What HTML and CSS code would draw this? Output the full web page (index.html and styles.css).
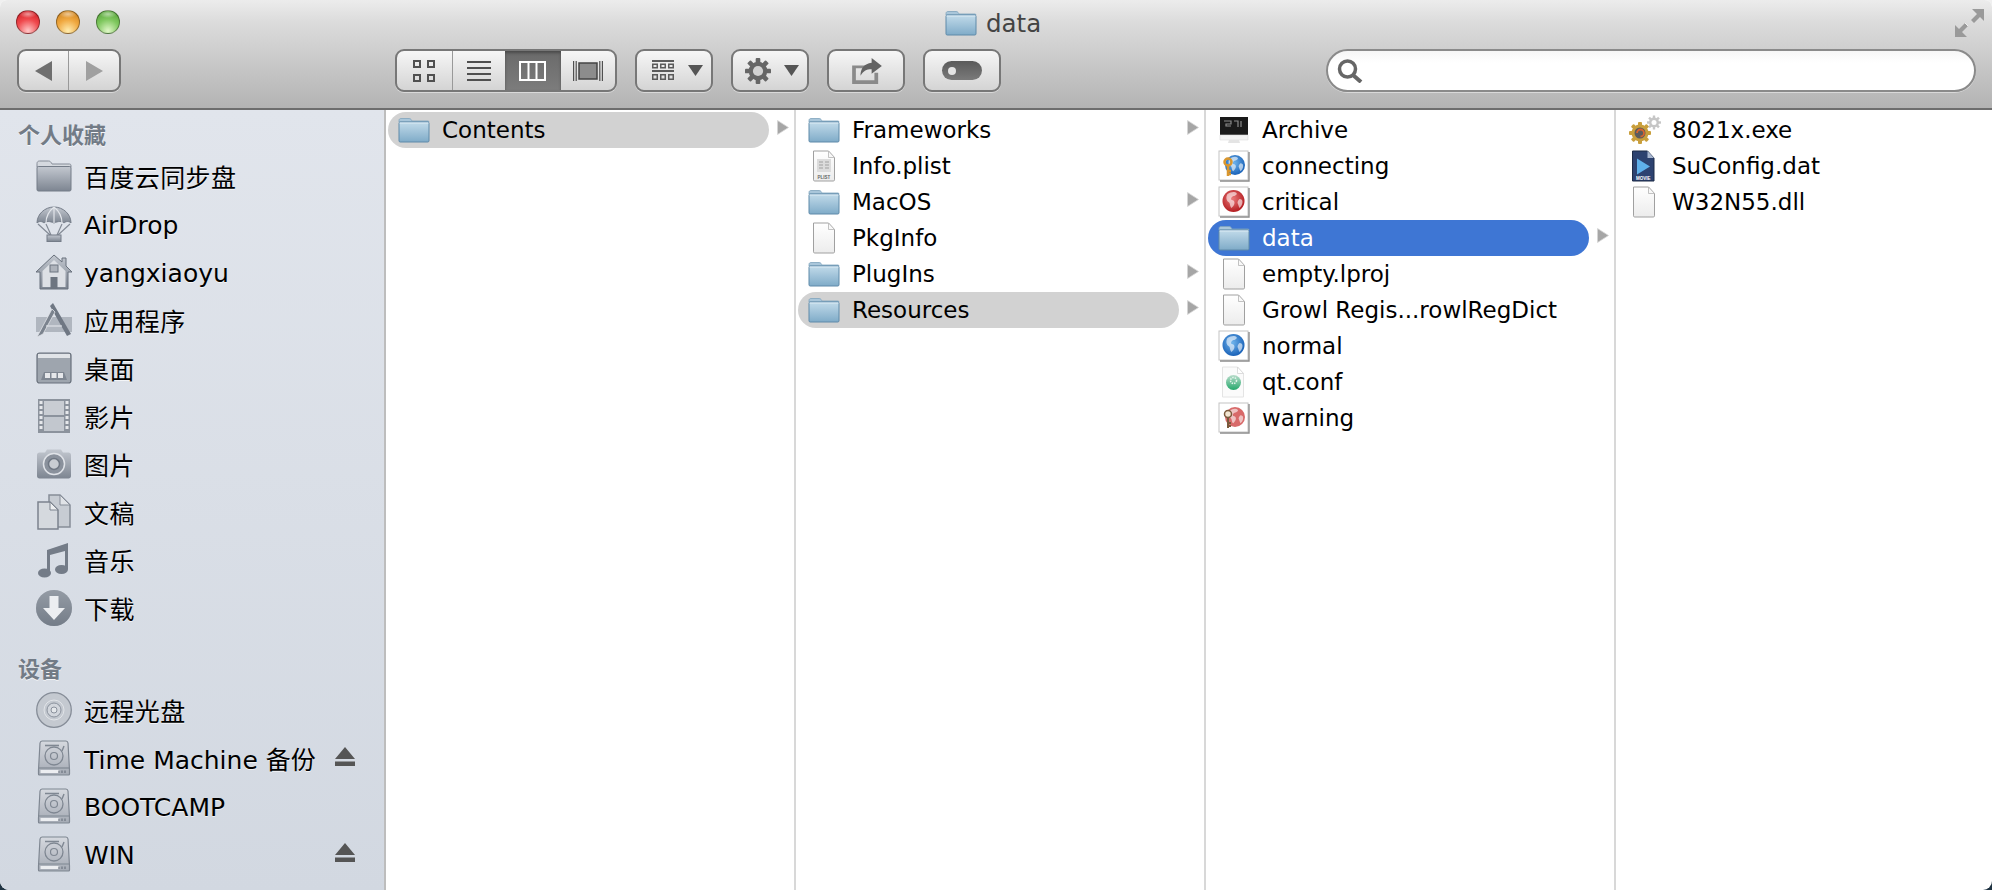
FILE: index.html
```html
<!DOCTYPE html>
<html lang="zh-CN">
<head>
    <meta charset="UTF-8">
    <title>data</title>
    <link rel="stylesheet" href="styles.css">
</head>
<body>

    <svg class="sprites" width="0" height="0">
        <defs>
            <linearGradient id="blueFolder" x1="0" y1="0" x2="0" y2="1">
                <stop offset="0" stop-color="#c2dbea"/>
                <stop offset="1" stop-color="#7fabc8"/>
            </linearGradient>
            <linearGradient id="greyIcon" x1="0" y1="0" x2="0" y2="1">
                <stop offset="0" stop-color="#c3c8d0"/>
                <stop offset="1" stop-color="#7d8591"/>
            </linearGradient>
            <linearGradient id="driveBody" x1="0" y1="0" x2="0" y2="1">
                <stop offset="0" stop-color="#d6d9df"/>
                <stop offset="1" stop-color="#a4aab4"/>
            </linearGradient>
            <linearGradient id="paper" x1="0" y1="0" x2="0" y2="1">
                <stop offset="0" stop-color="#ffffff"/>
                <stop offset="1" stop-color="#ececec"/>
            </linearGradient>
            <linearGradient id="qtGreen" x1="0" y1="0" x2="0" y2="1">
                <stop offset="0" stop-color="#b9dccb"/>
                <stop offset="1" stop-color="#25a96c"/>
            </linearGradient>
            <radialGradient id="globeBlue" cx="0.45" cy="0.4" r="0.6">
                <stop offset="0" stop-color="#6fb4ec"/>
                <stop offset="1" stop-color="#1a62b8"/>
            </radialGradient>
            <radialGradient id="globeRed" cx="0.45" cy="0.4" r="0.6">
                <stop offset="0" stop-color="#ea7a7a"/>
                <stop offset="1" stop-color="#b41e22"/>
            </radialGradient>

            <symbol id="folder" viewBox="0 0 32 26">
                <path d="M1 5V3.5C1 2 2 1.5 3 1.5h8c1.2 0 2 .6 2.6 1.8L14.2 4H30c.7 0 1 .4 1 1z" fill="#a9c6da" stroke="#7fa3bd" stroke-width=".8"/>
                <rect x="1" y="5" width="30" height="20" rx="1.2" fill="url(#blueFolder)" stroke="#5f8aa9" stroke-width="1"/>
                <path d="M1.6 6h28.8" stroke="#dcebf4" stroke-width="1"/>
            </symbol>

            <symbol id="page" viewBox="0 0 24 32">
                <path d="M1.5 1h15l6 6.5v22.3c0 .7-.4 1.2-1.2 1.2H2.7c-.8 0-1.2-.5-1.2-1.2z" fill="url(#paper)" stroke="#a0a0a0" stroke-width="1"/>
                <path d="M16.5 1v6.5h6z" fill="#f8f8f8" stroke="#b4b4b4" stroke-width=".8"/>
            </symbol>

            <symbol id="side-folder" viewBox="0 0 36 32">
                <path d="M1 7V3.5C1 2 2 1 3.5 1h9c1.4 0 2.2.7 3 2.2L16 4h17.500C34.500 4 35 4.600 35 6v1z" fill="#d5d9df" stroke="#868d98" stroke-width="1"/>
                <rect x="1" y="6.5" width="34" height="24.5" rx="1.4" fill="url(#greyIcon)" stroke="#747c88" stroke-width="1"/>
            </symbol>

            <symbol id="side-drive" viewBox="0 0 32 36">
                <path d="M4 1h24c1 0 1.8.8 2 2l1.5 27v4c0 .6-.5 1-1 1H1.5c-.5 0-1-.4-1-1v-4L2 3c.2-1.2 1-2 2-2z" fill="url(#driveBody)" stroke="#7f8792" stroke-width="1.2"/>
                <path d="M1 28h30" stroke="#7f8792" stroke-width="1.2"/>
                <path d="M2.5 30h19v3h-19z" fill="#eceef1"/>
                <path d="M21 30.500v2.500M24 30.500v2.500M27 30.500v2.500" stroke="#6d7580" stroke-width="1.2"/>
                <path d="M7 5.500h14" stroke="#7f8792" stroke-width="1.6"/>
                <circle cx="16" cy="16" r="9" fill="none" stroke="#7f8792" stroke-width="1.3"/>
                <circle cx="16" cy="16" r="3.5" fill="none" stroke="#7f8792" stroke-width="1.2"/>
                <path d="M24 11l2-5" stroke="#7f8792" stroke-width="1.4"/>
            </symbol>

            <symbol id="eject" viewBox="0 0 20 19">
                <path d="M10 0l10 12H0z M0 14.500h20V19H0z" fill="#555"/>
            </symbol>

            <symbol id="arrow" viewBox="0 0 12 15">
                <path d="M.5 .5L11.5 7.500 .5 14.500z" fill="#a6a6a6" stroke="#d6d6d6" stroke-width=".8"/>
            </symbol>

            <symbol id="monitor-doc" viewBox="0 0 30 32">
                <path d="M1 3h28v18H1z" fill="#1a1a1a"/>
                <path d="M1 21h28v5H1z" fill="#f3f3f3" stroke="#dcdcdc" stroke-width=".6"/>
                <path d="M10 26h10l1 3H9z" fill="#e4e4e4"/>
                <path d="M5 7h7v3H7v2h5M15 7h4v6M22 7v6" fill="none" stroke="#8c8c8c" stroke-width="1.2"/>
            </symbol>

            <symbol id="frame" viewBox="0 0 32 32">
                <rect x="1" y="1" width="29" height="29" fill="#fff" stroke="#c4c4c4"/>
                <path d="M31 2v29H2" fill="none" stroke="#8d8d8d" stroke-width="1.4"/>
            </symbol>

            <symbol id="continents" viewBox="0 0 22 22">
                <path d="M5 4c3-2 7-3 9-1 1 1-1 3-3 3-2 1-3 2-2 4 2 0 3 1 3 3s-2 4-3 5c-2-2-1-5-3-6C4 11 3 7 5 4z M17 9c2 0 3 1 3 3 0 3-2 5-3 6-1-2-1-3-2-5 0-2 1-3 2-4z" fill="#fff" opacity=".6"/>
            </symbol>
        </defs>
    </svg>

    <div class="window">

        <header class="toolbar">
            <div class="titlebar">
                <div class="lights">
                    <span class="light red"></span>
                    <span class="light amber"></span>
                    <span class="light green"></span>
                </div>
                <div class="title">
                    <svg class="title-icon"><use href="#folder"/></svg>
                    <span>data</span>
                </div>
                <svg class="fullscreen" viewBox="0 0 29 28">
                    <path d="M17 0h12v12l-4-4-6 6-3-3 6-6z M12 28H0V16l4 4 6-6 3 3-6 6z" fill="#9a9a9a"/>
                    <path d="M10 14l3 3" stroke="#eee" stroke-width="1"/>
                </svg>
            </div>

            <div class="controls">
                <div class="btn nav">
                    <span class="cell nav-cell">
                        <svg width="18" height="20" viewBox="0 0 18 20"><path d="M17 0v20L0 10z" fill="#6f6f6f"/></svg>
                    </span>
                    <span class="cell nav-cell">
                        <svg width="18" height="20" viewBox="0 0 18 20"><path d="M1 0v20l17-10z" fill="#a0a0a0"/></svg>
                    </span>
                </div>

                <div class="btn views">
                    <span class="cell view-cell first">
                        <svg width="22" height="24" viewBox="0 0 22 24" fill="none" stroke="#505050" stroke-width="2"><rect x="1" y="2" width="6" height="6"/><rect x="15" y="2" width="6" height="6"/><rect x="1" y="16" width="6" height="6"/><rect x="15" y="16" width="6" height="6"/></svg>
                    </span>
                    <span class="cell view-cell list">
                        <svg width="24" height="20" viewBox="0 0 24 20" fill="#505050"><rect y="0" width="24" height="2"/><rect y="6" width="24" height="2"/><rect y="12" width="24" height="2"/><rect y="18" width="24" height="2"/></svg>
                    </span>
                    <span class="cell view-cell on">
                        <svg width="27" height="20" viewBox="0 0 27 20" fill="none" stroke="#fff" stroke-width="2"><rect x="1" y="1" width="25" height="18"/><path d="M9.5 1v18M17.5 1v18"/></svg>
                    </span>
                    <span class="cell view-cell flow">
                        <svg width="30" height="20" viewBox="0 0 30 20" fill="#505050"><rect x="0" width="1.2" height="20"/><rect x="2.6" width="1.2" height="20"/><rect x="26.2" width="1.2" height="20"/><rect x="28.800" width="1.2" height="20"/><path d="M6 2h18v16H6z" fill="#8c8c8c" stroke="#444" stroke-width="1.5"/></svg>
                    </span>
                </div>

                <div class="btn arrange">
                    <svg width="22" height="22" viewBox="0 0 22 22" fill="#5a5a5a"><rect y="0" width="22" height="2"/><rect y="10" width="22" height="2"/><path fill-rule="evenodd" d="M0 3.500h6v5H0zM1.500 5v2h3V5zM8 3.500h6v5H8zM9.500 5v2h3V5zM16 3.500h6v5h-6zM17.500 5v2h3V5zM0 14h6v6H0zM1.500 15.500v3h3v-3zM8 14h6v6H8zM9.500 15.500v3h3v-3zM16 14h6v6h-6zM17.500 15.500v3h3v-3z"/></svg>
                    <svg class="drop" width="15" height="11" viewBox="0 0 15 11"><path d="M0 0h15L7.500 11z" fill="#555"/></svg>
                </div>

                <div class="btn action">
                    <svg width="28" height="26" viewBox="0 0 28 28">
                        <g fill="#666">
                            <rect x="11.500" y="0" width="5" height="28" rx="1"/>
                            <rect x="11.500" y="0" width="5" height="28" rx="1" transform="rotate(45 14 14)"/>
                            <rect x="11.500" y="0" width="5" height="28" rx="1" transform="rotate(90 14 14)"/>
                            <rect x="11.500" y="0" width="5" height="28" rx="1" transform="rotate(135 14 14)"/>
                            <circle cx="14" cy="14" r="10"/>
                        </g>
                        <circle cx="14" cy="14" r="5.500" fill="#d2d2d2"/>
                    </svg>
                    <svg class="drop" width="15" height="11" viewBox="0 0 15 11"><path d="M0 0h15L7.500 11z" fill="#555"/></svg>
                </div>

                <div class="btn share">
                    <svg width="32" height="26" viewBox="0 0 32 28">
                        <path d="M0 8h16v3H4v13h20v-8h4v12H0z" fill="#8a8a8a"/>
                        <path d="M21 0l11 8.500-11 8.500v-5c-6 0-9 2-12 7 0-8 4-13 12-14z" fill="#636363"/>
                    </svg>
                </div>

                <div class="btn tags">
                    <span class="tag-pill"><span class="tag-hole"></span></span>
                </div>

                <div class="search">
                    <svg width="28" height="24" viewBox="0 0 28 24" fill="none" stroke="#666">
                        <circle cx="10.5" cy="10" r="8" stroke-width="3.500"/>
                        <path d="M16 16l8 7" stroke-width="4"/>
                    </svg>
                </div>
            </div>
        </header>

        <main class="body">

            <nav class="sidebar">
                <div class="side-head">个人收藏</div>
                <div class="side-row">
                    <svg class="side-icon"><use href="#side-folder"/></svg>
                    <span class="cn">百度云同步盘</span>
                </div>
                <div class="side-row">
                    <svg class="side-icon" viewBox="0 0 36 36">
                        <path d="M1 17C1 8 9 1 18 1s17 7 17 16c-2-2-5-2-7 0-2-2-6-2-10 0-4-2-8-2-10 0-2-2-5-2-7 0z" fill="url(#greyIcon)" stroke="#747c88"/>
                        <path d="M18 1c-5 4-8 10-8 16M18 1c5 4 8 10 8 16M18 1v16" fill="none" stroke="#e2e5ea" stroke-width="1.2"/>
                        <path d="M2 18l12 11M10 18l5 11M26 18l-5 11M34 18L22 29" fill="none" stroke="#848b96" stroke-width="1.2"/>
                        <rect x="11" y="29" width="14" height="6.5" fill="url(#greyIcon)" stroke="#747c88"/>
                    </svg>
                    <span class="lat">AirDrop</span>
                </div>
                <div class="side-row">
                    <svg class="side-icon" viewBox="0 0 36 36">
                        <path d="M18 1l8 7V4h4v8l6 6h-4v17H4V18H0z" fill="url(#greyIcon)" stroke="#69717c"/>
                        <path d="M6.5 17L18 6l11.500 11v16h-23z" fill="#dde0e5"/>
                        <rect x="14" y="11" width="8" height="7" fill="#aeb3bb" stroke="#6d7580"/>
                        <rect x="14.5" y="23" width="7" height="12" fill="#6d7580"/>
                    </svg>
                    <span class="lat">yangxiaoyu</span>
                </div>
                <div class="side-row">
                    <svg class="side-icon" viewBox="0 0 36 36">
                        <path d="M0 15h36v15H0z" fill="#a5abb4" opacity=".8"/>
                        <path d="M17 1l18 31-4 2L14 4z" fill="#6f7783"/>
                        <path d="M16 7L1 35l6-3 12-22z" fill="#7b838e" stroke="#dfe2e7" stroke-width=".8"/>
                        <path d="M10 24h16" stroke="#dfe2e7" stroke-width="1.2"/>
                    </svg>
                    <span class="cn">应用程序</span>
                </div>
                <div class="side-row">
                    <svg class="side-icon" viewBox="0 0 36 32">
                        <rect x="1" y="1" width="34" height="30" rx="2.5" fill="#9ea5ae" stroke="#69717c" stroke-width="1.2"/>
                        <rect x="2" y="2" width="32" height="4" fill="#e1e4e8"/>
                        <path d="M5 28l3-8h20l3 8z" fill="#7f8792"/>
                        <path d="M9 21h5v5H9zM15.500 21h5v5h-5zM22 21h5v5h-5z" fill="#e6e8eb"/>
                    </svg>
                    <span class="cn">桌面</span>
                </div>
                <div class="side-row">
                    <svg class="side-icon" viewBox="0 0 36 36">
                        <rect x="2" y="1" width="32" height="34" fill="#8c939d"/>
                        <path d="M8 3h20v14H8z" fill="#c9cdd3"/>
                        <path d="M8 19h20v14H8z" fill="#c2c7ce"/>
                        <path d="M3.500 3h3v3h-3zM3.500 8h3v3h-3zM3.500 13h3v3h-3zM3.500 18h3v3h-3zM3.500 23h3v3h-3zM3.500 28h3v3h-3zM29.500 3h3v3h-3zM29.500 8h3v3h-3zM29.500 13h3v3h-3zM29.500 18h3v3h-3zM29.500 23h3v3h-3zM29.500 28h3v3h-3z" fill="#e6e8eb"/>
                    </svg>
                    <span class="cn">影片</span>
                </div>
                <div class="side-row">
                    <svg class="side-icon" viewBox="0 0 36 30">
                        <path d="M1 6c0-1.500 1-2.500 2.500-2.500H9L11 .5h14l2 3h5.500C34 3.500 35 4.500 35 6v21c0 1.500-1 2.500-2.500 2.500h-29C2 29.500 1 28.500 1 27z" fill="url(#greyIcon)"/>
                        <circle cx="18" cy="15" r="10.5" fill="#8a919c" stroke="#e0e3e8" stroke-width="1.5"/>
                        <circle cx="18" cy="15" r="5.5" fill="#c8ccd2" stroke="#6f7783" stroke-width="1.5"/>
                    </svg>
                    <span class="cn">图片</span>
                </div>
                <div class="side-row">
                    <svg class="side-icon" viewBox="0 0 36 36">
                        <path d="M13 1h11l10 10v22H13z" fill="#c7ccd3" stroke="#868d98" stroke-width="1.5"/>
                        <path d="M24 1v10h10z" fill="#e0e3e7" stroke="#868d98" stroke-width="1"/>
                        <path d="M2 8h12l8 8v19H2z" fill="#d5d9de" stroke="#7c838e" stroke-width="1.5"/>
                        <path d="M14 8v8h8z" fill="#eceef0" stroke="#7c838e" stroke-width="1"/>
                    </svg>
                    <span class="cn">文稿</span>
                </div>
                <div class="side-row">
                    <svg class="side-icon" viewBox="0 0 36 36">
                        <path d="M11 8L32 1v26h-3V9L14 13v19h-3z" fill="#747c88"/>
                        <ellipse cx="8.5" cy="31" rx="6.5" ry="4.5" fill="#747c88"/>
                        <ellipse cx="25.5" cy="27.5" rx="6.5" ry="4.5" fill="#747c88"/>
                    </svg>
                    <span class="cn">音乐</span>
                </div>
                <div class="side-row">
                    <svg class="side-icon" viewBox="0 0 36 36">
                        <circle cx="18" cy="18" r="18" fill="url(#greyIcon)"/>
                        <circle cx="18" cy="18" r="18" fill="#6e7682" opacity=".55"/>
                        <path d="M13.500 6h9v12H29L18 30 7 18h6.500z" fill="#eceef1"/>
                    </svg>
                    <span class="cn">下载</span>
                </div>

                <div class="side-head devices">设备</div>
                <div class="side-row">
                    <svg class="side-icon" viewBox="0 0 36 36">
                        <circle cx="18" cy="18" r="17.3" fill="#c4c9d0" stroke="#868d98" stroke-width="1.3"/>
                        <circle cx="18" cy="18" r="10" fill="none" stroke="#e1e4e8"/>
                        <circle cx="18" cy="18" r="7" fill="#d2d6dc" stroke="#8a919c"/>
                        <circle cx="18" cy="18" r="3" fill="#e4e7ea" stroke="#8a919c"/>
                    </svg>
                    <span class="cn">远程光盘</span>
                </div>
                <div class="side-row">
                    <svg class="side-icon drive"><use href="#side-drive"/></svg>
                    <span>Time Machine 备份</span>
                    <svg class="eject"><use href="#eject"/></svg>
                </div>
                <div class="side-row">
                    <svg class="side-icon drive"><use href="#side-drive"/></svg>
                    <span class="lat">BOOTCAMP</span>
                </div>
                <div class="side-row">
                    <svg class="side-icon drive"><use href="#side-drive"/></svg>
                    <span class="lat">WIN</span>
                    <svg class="eject"><use href="#eject"/></svg>
                </div>
            </nav>

            <section class="column">
                <div class="row open">
                    <svg class="icon"><use href="#folder"/></svg>
                    <span class="pill">Contents</span>
                    <svg class="more"><use href="#arrow"/></svg>
                </div>
            </section>

            <section class="column">
                <div class="row">
                    <svg class="icon"><use href="#folder"/></svg>
                    <span class="pill">Frameworks</span>
                    <svg class="more"><use href="#arrow"/></svg>
                </div>
                <div class="row">
                    <svg class="icon file" viewBox="0 0 32 32">
                        <use href="#page" x="4" width="24" height="32"/>
                        <rect x="9" y="9" width="14" height="13" fill="#dcdcdc"/>
                        <path d="M11 12h4M17 12h4M11 15h4M17 15h4M11 18h4M17 18h4" stroke="#b4b4b4" stroke-width="1.3"/>
                        <text class="tiny plist" x="16" y="28.5" text-anchor="middle">PLIST</text>
                    </svg>
                    <span class="pill">Info.plist</span>
                </div>
                <div class="row">
                    <svg class="icon"><use href="#folder"/></svg>
                    <span class="pill">MacOS</span>
                    <svg class="more"><use href="#arrow"/></svg>
                </div>
                <div class="row">
                    <svg class="icon file"><use href="#page"/></svg>
                    <span class="pill">PkgInfo</span>
                </div>
                <div class="row">
                    <svg class="icon"><use href="#folder"/></svg>
                    <span class="pill">PlugIns</span>
                    <svg class="more"><use href="#arrow"/></svg>
                </div>
                <div class="row open">
                    <svg class="icon"><use href="#folder"/></svg>
                    <span class="pill">Resources</span>
                    <svg class="more"><use href="#arrow"/></svg>
                </div>
            </section>

            <section class="column">
                <div class="row">
                    <svg class="icon monitor"><use href="#monitor-doc"/></svg>
                    <span class="pill">Archive</span>
                </div>
                <div class="row">
                    <svg class="icon globe" viewBox="0 0 32 32">
                        <use href="#frame" width="32" height="32"/>
                        <circle cx="17" cy="15" r="10" fill="url(#globeBlue)"/>
                        <use href="#continents" x="7" y="5" width="20" height="20"/>
                        <circle cx="10" cy="12" r="3.500" fill="none" stroke="#d9962e" stroke-width="2.5"/>
                        <path d="M10 16v10M10 21h3M10 24h3" stroke="#d9962e" stroke-width="2.5"/>
                    </svg>
                    <span class="pill">connecting</span>
                </div>
                <div class="row">
                    <svg class="icon globe" viewBox="0 0 32 32">
                        <use href="#frame" width="32" height="32"/>
                        <circle cx="15.5" cy="15" r="11" fill="url(#globeRed)"/>
                        <use href="#continents" x="4.500" y="4" width="22" height="22"/>
                    </svg>
                    <span class="pill">critical</span>
                </div>
                <div class="row selected">
                    <svg class="icon"><use href="#folder"/></svg>
                    <span class="pill">data</span>
                    <svg class="more"><use href="#arrow"/></svg>
                </div>
                <div class="row">
                    <svg class="icon file"><use href="#page"/></svg>
                    <span class="pill">empty.lproj</span>
                </div>
                <div class="row">
                    <svg class="icon file"><use href="#page"/></svg>
                    <span class="pill">Growl Regis...rowlRegDict</span>
                </div>
                <div class="row">
                    <svg class="icon globe" viewBox="0 0 32 32">
                        <use href="#frame" width="32" height="32"/>
                        <circle cx="15.5" cy="15" r="11" fill="url(#globeBlue)"/>
                        <use href="#continents" x="4.500" y="4" width="22" height="22"/>
                    </svg>
                    <span class="pill">normal</span>
                </div>
                <div class="row">
                    <svg class="icon file" viewBox="0 0 32 32">
                        <path d="M4.5 1h15l6 6.500v23.500h-21z" fill="#fbfbfb" stroke="#e4e4e4"/>
                        <path d="M19.500 1v6.500h6z" fill="#fff" stroke="#d4d4d4" stroke-width=".8"/>
                        <circle cx="15.500" cy="16.500" r="7.500" fill="url(#qtGreen)"/>
                        <circle cx="15.500" cy="14.500" r="3" fill="none" stroke="#e4f4ec" stroke-width="1.500" stroke-dasharray="1.500 1"/>
                    </svg>
                    <span class="pill">qt.conf</span>
                </div>
                <div class="row">
                    <svg class="icon globe" viewBox="0 0 32 32">
                        <use href="#frame" width="32" height="32"/>
                        <circle cx="17" cy="15" r="10" fill="#d86a6a"/>
                        <use href="#continents" x="7" y="5" width="20" height="20"/>
                        <circle cx="10" cy="12" r="3.500" fill="#f3e6d2" stroke="#7b5a3c" stroke-width="1.5"/>
                        <path d="M10 16v10M10 21h3M10 24h3" stroke="#7b5a3c" stroke-width="2"/>
                    </svg>
                    <span class="pill">warning</span>
                </div>
            </section>

            <section class="column last">
                <div class="row">
                    <svg class="icon exe" viewBox="0 0 34 32">
                        <g fill="#c6c6c6">
                            <rect x="24.800" y="1.500" width="2.400" height="14"/>
                            <rect x="24.800" y="1.500" width="2.400" height="14" transform="rotate(45 26 8.500)"/>
                            <rect x="24.800" y="1.500" width="2.400" height="14" transform="rotate(90 26 8.500)"/>
                            <rect x="24.800" y="1.500" width="2.400" height="14" transform="rotate(135 26 8.500)"/>
                            <circle cx="26" cy="8.500" r="5"/>
                        </g>
                        <circle cx="26" cy="8.500" r="2.500" fill="#fff"/>
                        <g fill="#c99f3c">
                            <rect x="10" y="8" width="4" height="22" rx="1"/>
                            <rect x="10" y="8" width="4" height="22" rx="1" transform="rotate(45 12 19)"/>
                            <rect x="10" y="8" width="4" height="22" rx="1" transform="rotate(90 12 19)"/>
                            <rect x="10" y="8" width="4" height="22" rx="1" transform="rotate(135 12 19)"/>
                            <circle cx="12" cy="19" r="8.500"/>
                        </g>
                        <circle cx="12" cy="19" r="5.500" fill="#5c5c5c"/>
                        <path d="M9 19a3.500 3.500 0 1 1 3.500 3.500" fill="none" stroke="#d9642e" stroke-width="1.800"/>
                    </svg>
                    <span class="pill">8021x.exe</span>
                </div>
                <div class="row">
                    <svg class="icon file" viewBox="0 0 32 32">
                        <path d="M4.500 1h15l6.500 7v23H4.500z" fill="#2d4270" stroke="#1d2b47"/>
                        <path d="M19.500 1v7h6.500z" fill="#a8b6cf"/>
                        <path d="M9 8.500l13 8-13 8z" fill="#5fb0ea"/>
                        <text class="tiny movie" x="15.300" y="29.500" text-anchor="middle">MOVIE</text>
                    </svg>
                    <span class="pill">SuConfig.dat</span>
                </div>
                <div class="row">
                    <svg class="icon file"><use href="#page"/></svg>
                    <span class="pill">W32N55.dll</span>
                </div>
            </section>

        </main>
    </div>

</body>
</html>
```

FILE: styles.css
```css
* {
    margin: 0;
    padding: 0;
    box-sizing: border-box;
}

html, body {
    width: 100%;
    height: 100%;
    overflow: hidden;
}

body {
    background: linear-gradient(#f0f0f0 50%, #1f3342 50%);
    font-family: "DejaVu Sans", "Noto Sans CJK SC", sans-serif;
    font-size: 23px;
    color: #000;
}

.sprites {
    position: absolute;
}

.window {
    width: 1992px;
    height: 890px;
    display: flex;
    flex-direction: column;
    border-radius: 7px 7px 9px 9px;
    overflow: hidden;
    background: #fff;
}

/* Toolbar */
.toolbar {
    height: 110px;
    flex: none;
    background: linear-gradient(#ececec, #dcdcdc 20%, #b3b3b3);
    border-bottom: 2px solid #6d6d6d;
    padding: 9px 8px 0 16px;
}

.titlebar {
    height: 28px;
    display: flex;
    align-items: center;
    justify-content: space-between;
    position: relative;
}

.lights {
    display: flex;
    gap: 16px;
    margin-top: -3px;
}

.light {
    width: 24px;
    height: 24px;
    border-radius: 50%;
    border: 1px solid rgba(0, 0, 0, 0.35);
}

.red {
    background: radial-gradient(ellipse 40% 18% at 50% 14%, rgba(255, 255, 255, 0.5), transparent),
                radial-gradient(circle at 50% 90%, #ffc8c8, #f04a4e 50%, #c8141c);
}

.amber {
    background: radial-gradient(ellipse 40% 18% at 50% 14%, rgba(255, 255, 255, 0.5), transparent),
                radial-gradient(circle at 50% 90%, #ffedb0, #f0a840 50%, #c47a18);
}

.green {
    background: radial-gradient(ellipse 40% 18% at 50% 14%, rgba(255, 255, 255, 0.5), transparent),
                radial-gradient(circle at 50% 90%, #e0f7c8, #80c860 50%, #4c9a30);
}

.title {
    position: absolute;
    left: 929px;
    top: 1px;
    height: 26px;
    display: flex;
    align-items: center;
    gap: 9px;
    font-size: 24.5px;
    color: #444;
}

.title-icon {
    width: 32px;
    height: 26px;
}

.fullscreen {
    width: 29px;
    height: 28px;
}

.controls {
    display: flex;
    align-items: flex-start;
    margin-top: 12px;
    padding-left: 1px;
}

.btn {
    height: 43px;
    border: 2px solid #777;
    border-radius: 9px;
    background: linear-gradient(#f6f6f6, #d4d4d4);
    box-shadow: 0 1px 0 rgba(255, 255, 255, 0.45);
    display: flex;
    align-items: center;
    justify-content: center;
}

.cell {
    height: 100%;
    display: flex;
    align-items: center;
    justify-content: center;
}

.nav {
    width: 104px;
    margin-right: 274px;
}

.nav-cell {
    flex: 1;
}

.nav-cell + .nav-cell {
    box-shadow: -1px 0 0 #999;
}

.views {
    width: 222px;
    margin-right: 18px;
    overflow: hidden;
    justify-content: flex-start;
}

.view-cell {
    width: 57px;
}

.view-cell.first {
    width: 56px;
    border-right: 1px solid #999;
}

.view-cell.list {
    width: 53px;
}

.view-cell.on {
    width: 56px;
    background: linear-gradient(#6a6a6a, #7c7c7c);
    box-shadow: inset 0 2px 3px rgba(0, 0, 0, 0.3);
}

.view-cell.flow {
    width: 55px;
}

.arrange, .action, .share, .tags {
    width: 78px;
    margin-right: 18px;
}

.arrange {
    justify-content: flex-start;
    padding-left: 15px;
}

.arrange .drop {
    margin-left: 14px;
}

.action {
    justify-content: flex-start;
    padding-left: 11px;
}

.action .drop {
    margin-left: 12px;
}

.share svg {
    margin-left: 2px;
}

.tags {
    margin-right: 325px;
}

.tag-pill {
    width: 40px;
    height: 19px;
    border-radius: 10px;
    background: linear-gradient(#5a5a5a, #7a7a7a);
    display: flex;
    align-items: center;
    padding-left: 6px;
}

.tag-hole {
    width: 8px;
    height: 8px;
    border-radius: 50%;
    background: #e4e4e4;
}

.search {
    width: 650px;
    height: 43px;
    border: 2px solid #8a8a8a;
    border-radius: 22px;
    background: linear-gradient(#f6f6f6, #fff 30%);
    box-shadow: 0 1px 0 rgba(255, 255, 255, 0.45);
    display: flex;
    align-items: center;
    padding-left: 9px;
}

/* Sidebar and columns */
.body {
    flex: 1;
    display: flex;
    min-height: 0;
}

.sidebar {
    width: 386px;
    flex: none;
    background: linear-gradient(#e1e5ec, #d2d8e1);
    border-right: 2px solid #bdbdbd;
    padding-top: 5px;
}

.side-head {
    height: 37px;
    padding: 0 0 2px 18px;
    display: flex;
    align-items: center;
    font-size: 22px;
    font-weight: bold;
    color: #727b86;
    text-shadow: 0 1px 0 rgba(255, 255, 255, 0.7);
}

.side-head.devices {
    margin-top: 18px;
    height: 36px;
}

.side-row {
    height: 48px;
    display: flex;
    align-items: center;
    padding-left: 36px;
    padding-right: 29px;
    font-size: 25px;
    text-shadow: 0 1px 0 rgba(255, 255, 255, 0.7);
}

.side-row .lat {
    padding-top: 3px;
}

.side-row .cn {
    letter-spacing: 0.4px;
}

.side-icon {
    width: 36px;
    height: 36px;
    flex: none;
    margin-right: 12px;
}

.side-icon.drive {
    width: 34px;
    margin: 0 13px 0 1px;
}

.eject {
    width: 20px;
    height: 19px;
    margin-left: auto;
    margin-top: -3px;
}

.column {
    width: 410px;
    flex: none;
    border-right: 2px solid #d8d8d8;
    padding-top: 2px;
}

.column.last {
    flex: 1;
    border-right: none;
}

.row {
    height: 36px;
    display: flex;
    align-items: center;
    position: relative;
    padding-left: 12px;
}

.pill {
    display: block;
    position: absolute;
    left: 2px;
    top: 0;
    width: 381px;
    height: 36px;
    line-height: 36px;
    padding-left: 54px;
    border-radius: 18px;
    white-space: nowrap;
}

.open .pill {
    background: #d2d2d2;
}

.selected .pill {
    background: #3e76d4;
    color: #fff;
}

.icon {
    width: 32px;
    height: 26px;
    flex: none;
    position: relative;
    z-index: 1;
}

.icon.file, .icon.globe, .icon.monitor {
    height: 32px;
}

.icon.exe {
    width: 34px;
    height: 32px;
}

.tiny {
    font-family: "Liberation Sans", sans-serif;
    font-size: 4.5px;
    font-weight: bold;
}

.movie {
    fill: #fff;
}

.plist {
    fill: #666;
}

.more {
    position: absolute;
    left: 391px;
    top: 8px;
    width: 12px;
    height: 15px;
}
```
